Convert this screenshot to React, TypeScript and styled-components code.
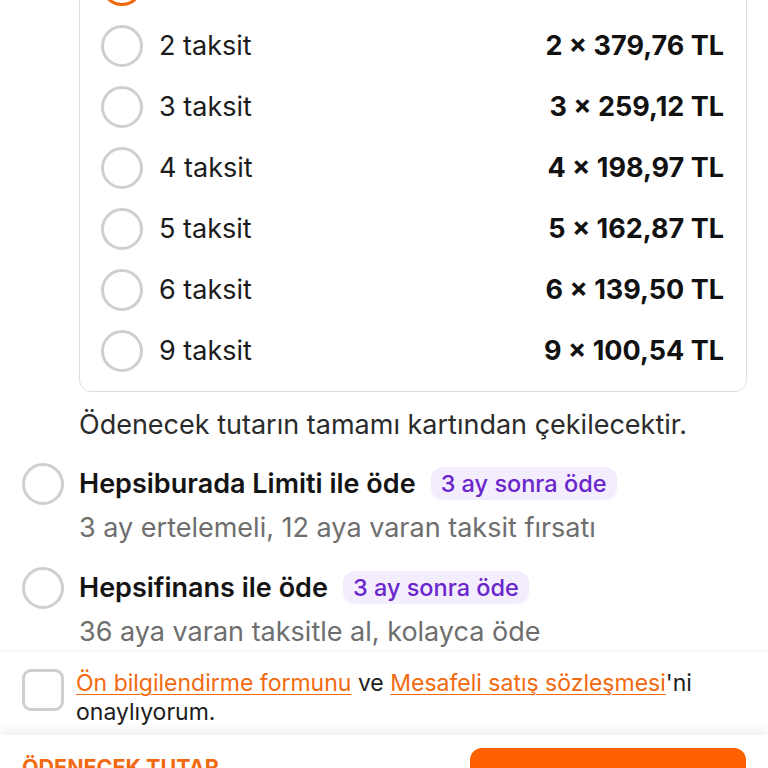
import React, { FC } from "react";
import styled, { createGlobalStyle } from "styled-components";

const installments = [
  { count: 1, label: "Tek çekim", price: "759,52 TL", selected: true },
  { count: 2, label: "2 taksit", price: "2 × 379,76 TL" },
  { count: 3, label: "3 taksit", price: "3 × 259,12 TL" },
  { count: 4, label: "4 taksit", price: "4 × 198,97 TL" },
  { count: 5, label: "5 taksit", price: "5 × 162,87 TL" },
  { count: 6, label: "6 taksit", price: "6 × 139,50 TL" },
  { count: 9, label: "9 taksit", price: "9 × 100,54 TL" },
];

const payOptions = [
  {
    id: "limit",
    title: "Hepsiburada Limiti ile öde",
    badge: "3 ay sonra öde",
    desc: "3 ay ertelemeli, 12 aya varan taksit fırsatı",
  },
  {
    id: "finans",
    title: "Hepsifinans ile öde",
    badge: "3 ay sonra öde",
    desc: "36 aya varan taksitle al, kolayca öde",
  },
];

const App: FC = () => {
  return (
    <>
      <GlobalStyle />
      <Screen>
        <Scroll>
          <Card>
            {installments.map(item => (
              <Row key={item.count}>
                <Radio $active={item.selected} />
                <RowLabel>{item.label}</RowLabel>
                <Price>{item.price}</Price>
              </Row>
            ))}
          </Card>

          <Note>Ödenecek tutarın tamamı kartından çekilecektir.</Note>

          <Options>
            {payOptions.map(opt => (
              <Option key={opt.id}>
                <Radio />
                <OptionBody>
                  <OptionHead>
                    <OptionTitle>{opt.title}</OptionTitle>
                    <Badge>{opt.badge}</Badge>
                  </OptionHead>
                  <OptionDesc>{opt.desc}</OptionDesc>
                </OptionBody>
              </Option>
            ))}
          </Options>
        </Scroll>

        <Agreement>
          <Checkbox />
          <AgreementText>
            <Link>Ön bilgilendirme formunu</Link> ve{" "}
            <Link>Mesafeli satış sözleşmesi</Link>'ni onaylıyorum.
          </AgreementText>
        </Agreement>

        <BottomBar>
          <TotalLabel>Ödenecek tutar</TotalLabel>
          <PayButton />
        </BottomBar>
      </Screen>
    </>
  );
};

export default App;

const GlobalStyle = createGlobalStyle`
  html, body {
    margin: 0;
    padding: 0;
    background: #fff;
    overflow: hidden;
  }
  body {
    font-family: Inter, "Noto Sans", "Liberation Sans", sans-serif;
    color: #1c1c1c;
  }
`;

const Screen = styled.div`
  height: 768px;
  display: flex;
  flex-direction: column;
  overflow: hidden;
`;

const Scroll = styled.div`
  margin-top: -57px;
`;

const Card = styled.div`
  margin: 0 21px 0 79px;
  padding: 10px 22px 10px 21px;
  border: 1px solid #dedede;
  border-radius: 12px;
`;

const Row = styled.div`
  height: 61px;
  display: flex;
  align-items: center;
`;

const Radio = styled.span<{ $active?: boolean }>`
  flex: none;
  box-sizing: border-box;
  width: 42px;
  height: 42px;
  border-radius: 50%;
  border: 3px solid ${p => (p.$active ? "#f26a10" : "#cfcfcf")};
`;

const RowLabel = styled.span`
  margin-left: 16px;
  font-size: 27px;
  line-height: 32px;
  flex: 1;
`;

const Price = styled.span`
  font-size: 27px;
  line-height: 32px;
  font-weight: 700;
  color: #111;
`;

const Note = styled.div`
  margin: 17px 0 0 79px;
  font-size: 27px;
  line-height: 32px;
  color: #2b2b2b;
`;

const Options = styled.div`
  margin-top: 26px;
  padding: 0 22px;
  display: flex;
  flex-direction: column;
  gap: 27px;
`;

const Option = styled.div`
  display: flex;
  gap: 15px;
  align-items: flex-start;
  ${Radio} {
    margin-top: -4px;
  }
`;

const OptionBody = styled.div`
  display: flex;
  flex-direction: column;
  gap: 13px;
`;

const OptionHead = styled.div`
  display: flex;
  align-items: center;
  gap: 15px;
  height: 32px;
`;

const OptionTitle = styled.span`
  font-size: 27px;
  font-weight: 600;
  color: #141414;
`;

const Badge = styled.span`
  background: #f3edfd;
  color: #6b25cc;
  font-size: 23.5px;
  font-weight: 500;
  line-height: 33px;
  padding: 0 10px;
  border-radius: 12px;
`;

const OptionDesc = styled.div`
  font-size: 27px;
  line-height: 32px;
  color: #6e6e6e;
`;

const Agreement = styled.div`
  margin-top: 4px;
  padding: 17px 22px 8px;
  display: flex;
  gap: 12px;
  align-items: flex-start;
  box-shadow: 0 -1px 2px rgba(0, 0, 0, 0.06);
  position: relative;
`;

const Checkbox = styled.span`
  flex: none;
  box-sizing: border-box;
  width: 42px;
  height: 42px;
  border-radius: 9px;
  border: 3px solid #cfcfcf;
  margin-top: 0;
`;

const AgreementText = styled.div`
  font-size: 23px;
  line-height: 29px;
  color: #1c1c1c;
`;

const Link = styled.a`
  color: #f26a10;
  text-decoration: underline;
  text-underline-offset: 3px;
  text-decoration-thickness: 1px;
`;

const BottomBar = styled.div`
  flex: 1;
  display: flex;
  justify-content: space-between;
  align-items: flex-start;
  padding: 13px 22px 0;
  box-shadow: 0 -6px 10px rgba(0, 0, 0, 0.05);
  position: relative;
`;

const TotalLabel = styled.span`
  margin-top: 6px;
  font-size: 21.5px;
  font-weight: 700;
  text-transform: uppercase;
  color: #f26a10;
`;

const PayButton = styled.button`
  width: 276px;
  height: 60px;
  border: none;
  border-radius: 12px;
  background: #ff6000;
`;
